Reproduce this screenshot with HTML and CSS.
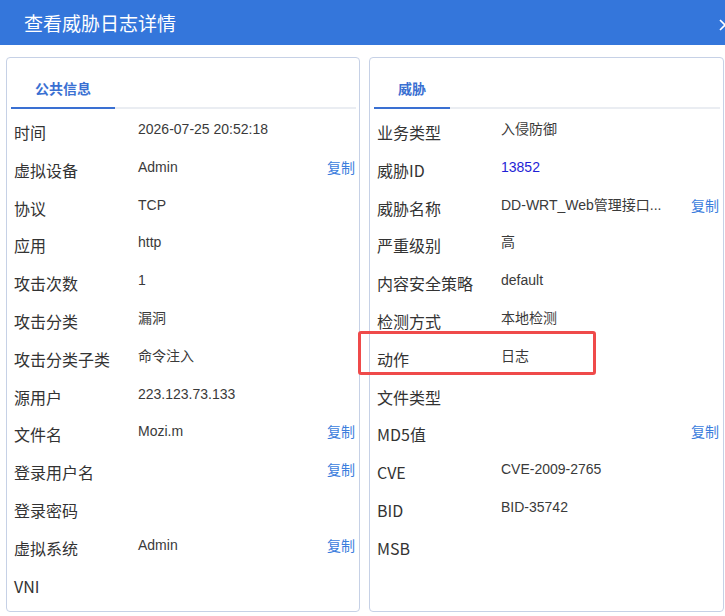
FILE: index.html
```html
<!DOCTYPE html>
<html lang="zh-CN">
<head>
    <meta charset="UTF-8">
    <meta name="viewport" content="width=device-width, initial-scale=1.0">
    <title>查看威胁日志详情</title>
    <link rel="stylesheet" href="styles.css">
</head>
<body>
    <div class="dialog-header">
        <span class="dialog-title">查看威胁日志详情</span>
        <span class="close">
            <svg width="12" height="12" viewBox="0 0 12 12"><path d="M1 1L11 11M11 1L1 11" stroke="#fff" stroke-width="1.6" fill="none"/></svg>
        </span>
    </div>
    <div class="dialog-body">
        <div class="panel">
            <div class="tabs"><span class="tab">公共信息</span></div>
            <div class="rows">
                <div class="row"><span class="label">时间</span><span class="value">2026-07-25 20:52:18</span></div>
                <div class="row"><span class="label">虚拟设备</span><span class="value">Admin</span><a class="copy">复制</a></div>
                <div class="row"><span class="label">协议</span><span class="value">TCP</span></div>
                <div class="row"><span class="label">应用</span><span class="value">http</span></div>
                <div class="row"><span class="label">攻击次数</span><span class="value">1</span></div>
                <div class="row"><span class="label">攻击分类</span><span class="value">漏洞</span></div>
                <div class="row"><span class="label">攻击分类子类</span><span class="value">命令注入</span></div>
                <div class="row"><span class="label">源用户</span><span class="value">223.123.73.133</span></div>
                <div class="row"><span class="label">文件名</span><span class="value">Mozi.m</span><a class="copy">复制</a></div>
                <div class="row"><span class="label">登录用户名</span><span class="value"></span><a class="copy">复制</a></div>
                <div class="row"><span class="label">登录密码</span><span class="value"></span></div>
                <div class="row"><span class="label">虚拟系统</span><span class="value">Admin</span><a class="copy">复制</a></div>
                <div class="row"><span class="label">VNI</span><span class="value"></span></div>
            </div>
        </div>
        <div class="panel">
            <div class="tabs"><span class="tab">威胁</span></div>
            <div class="rows">
                <div class="row"><span class="label">业务类型</span><span class="value">入侵防御</span></div>
                <div class="row"><span class="label">威胁ID</span><span class="value link">13852</span></div>
                <div class="row"><span class="label">威胁名称</span><span class="value">DD-WRT_Web管理接口...</span><a class="copy">复制</a></div>
                <div class="row"><span class="label">严重级别</span><span class="value">高</span></div>
                <div class="row"><span class="label">内容安全策略</span><span class="value">default</span></div>
                <div class="row"><span class="label">检测方式</span><span class="value">本地检测</span></div>
                <div class="row"><span class="label">动作</span><span class="value">日志</span><span class="highlight"></span></div>
                <div class="row"><span class="label">文件类型</span><span class="value"></span></div>
                <div class="row"><span class="label">MD5值</span><span class="value"></span><a class="copy">复制</a></div>
                <div class="row"><span class="label">CVE</span><span class="value">CVE-2009-2765</span></div>
                <div class="row"><span class="label">BID</span><span class="value">BID-35742</span></div>
                <div class="row"><span class="label">MSB</span><span class="value"></span></div>
            </div>
        </div>
    </div>
</body>
</html>
```

FILE: styles.css
```css
body {
    margin: 0;
    font-family: "Noto Sans CJK SC", sans-serif;
    background: #fff;
    color: #333;
    overflow: hidden;
}
.dialog-header {
    height: 45px;
    background-color: #3476db;
    display: flex;
    align-items: center;
    justify-content: space-between;
    padding-left: 24px;
}
.dialog-title {
    color: #fff;
    font-size: 19px;
    line-height: 24px;
}
.close {
    display: flex;
    margin-right: -6px;
    margin-top: 4px;
}
.dialog-body {
    display: grid;
    grid-template-columns: 354px 355px;
    gap: 9px;
    padding: 12px 0 0 6px;
}
.panel {
    height: 555px;
    border: 1px solid #c6d1e6;
    border-radius: 4px;
    box-sizing: border-box;
    padding: 0 3px 0 4px;
}
.tabs {
    padding-top: 20px;
    border-bottom: 2px solid #eaedf2;
    display: flex;
}
.tab {
    font-size: 14px;
    font-weight: bold;
    line-height: 20px;
    color: #3a70d2;
    padding: 0 24px 9px;
    border-bottom: 2px solid #3a70d2;
    margin-bottom: -2px;
}
.rows {
    margin-top: 11px;
}
.row {
    position: relative;
    height: 37.8px;
    display: flex;
    align-items: flex-start;
    padding: 0 1px 0 3px;
}
.label {
    width: 124px;
    flex-shrink: 0;
    font-size: 16px;
    line-height: 24px;
    color: #333;
}
.value {
    flex: 1;
    font-family: "Liberation Sans", "Noto Sans CJK SC", sans-serif;
    font-size: 14px;
    line-height: 18px;
    color: #3a3a3a;
    white-space: nowrap;
}
.value.link {
    color: #1f1fd6;
}
.copy {
    font-size: 14px;
    line-height: 18px;
    color: #3b7ddd;
    cursor: pointer;
}
.highlight {
    position: absolute;
    left: -16px;
    top: -16px;
    width: 238px;
    height: 44px;
    border: 3px solid #ef4a4a;
    border-radius: 3px;
    box-sizing: border-box;
}
```
